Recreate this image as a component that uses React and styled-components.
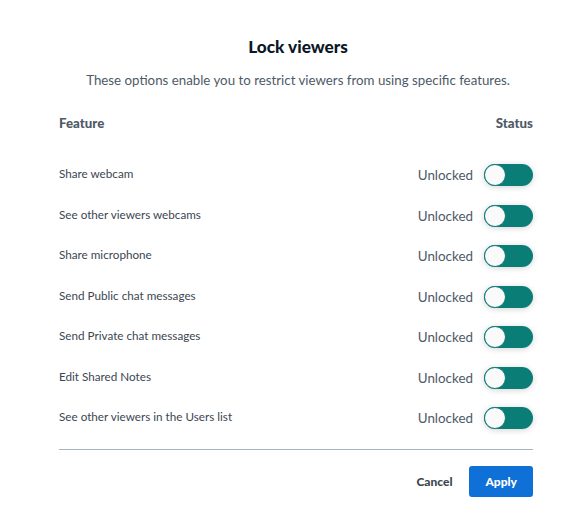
import React, { useState } from "react"
import styled, { createGlobalStyle } from "styled-components"

const GlobalStyle = createGlobalStyle`
  html, body { margin: 0; padding: 0; background: #fff; }
  body { font-family: Lato, "Liberation Sans", sans-serif; }
`

const features = [
  "Share webcam",
  "See other viewers webcams",
  "Share microphone",
  "Send Public chat messages",
  "Send Private chat messages",
  "Edit Shared Notes",
  "See other viewers in the Users list",
]

//{{{ Modal
const Modal = styled.div`
  width: 474px;
  padding: 36px 53px 0 59px;
  display: flex;
  flex-direction: column;
`
const Title = styled.h2`
  margin: 0;
  text-align: center;
  font: 900 17.2px Lato, sans-serif;
  color: #0b1727;
  line-height: 22px;
  padding-left: 4px;
`
const Subtitle = styled.p`
  margin: 11px 0 0;
  text-align: center;
  font: 400 13.3px Lato, sans-serif;
  color: #4e5a66;
  line-height: 22px;
  padding-left: 4px;
`
const HeaderRow = styled.div`
  display: flex;
  justify-content: space-between;
  margin-top: 22px;
  font: 900 13.3px Lato, sans-serif;
  color: #4e5a66;
  line-height: 20px;
`
const List = styled.div`
  display: flex;
  flex-direction: column;
  margin-top: 22px;
`
const Row = styled.div`
  display: flex;
  align-items: center;
  justify-content: space-between;
  height: 40.5px;
`
const Label = styled.span`
  font: 400 11.7px Lato, sans-serif;
  color: #3b4651;
  margin-top: -4px;
`
const StatusCell = styled.div`
  display: flex;
  align-items: center;
  gap: 11px;
`
const StatusText = styled.span`
  font: 400 13.4px Lato, sans-serif;
  color: #4e5a66;
`
//}}}
//{{{ Toggle
const Track = styled.button`
  position: relative;
  width: 49px;
  height: 22px;
  padding: 0;
  border: none;
  border-radius: 11px;
  background: #0b7d77;
  box-shadow: 0 1px 6px rgba(0, 0, 0, 0.18);
  cursor: pointer;
`
const Knob = styled.span`
  position: absolute;
  top: 0;
  left: ${({ $on }) => ($on ? "27px" : "0")};
  width: 22px;
  height: 22px;
  box-sizing: border-box;
  border-radius: 50%;
  background: #fafafa;
  border: 1.5px solid #0b7d77;
`
//}}}
const Divider = styled.hr`
  margin: 10px 0 0;
  border: none;
  border-top: 1px solid #a7b3bd;
`
const Footer = styled.div`
  display: flex;
  justify-content: flex-end;
  align-items: center;
  gap: 17px;
  margin-top: 16px;
`
const Button = styled.button`
  font: 900 12px Lato, sans-serif;
  border: none;
  border-radius: 3px;
  height: 31px;
  cursor: pointer;
  padding: ${({ $primary }) => ($primary ? "0 16px" : "0")};
  background: ${({ $primary }) => ($primary ? "#0f70d7" : "transparent")};
  color: ${({ $primary }) => ($primary ? "#fff" : "#3b4651")};
`

const Toggle = ({ on, onClick }) => (
  <Track onClick={onClick} aria-label="toggle">
    <Knob $on={on} />
  </Track>
)

export default function App() {
  const [locked, setLocked] = useState(features.map(() => false))
  const flip = (i) => setLocked((l) => l.map((v, j) => (j === i ? !v : v)))
  return (
    <>
      <GlobalStyle />
      <Modal>
        <Title>Lock viewers</Title>
        <Subtitle>These options enable you to restrict viewers from using specific features.</Subtitle>
        <HeaderRow>
          <span>Feature</span>
          <span>Status</span>
        </HeaderRow>
        <List>
          {features.map((f, i) => (
            <Row key={f}>
              <Label>{f}</Label>
              <StatusCell>
                <StatusText>{locked[i] ? "Locked" : "Unlocked"}</StatusText>
                <Toggle on={locked[i]} onClick={() => flip(i)} />
              </StatusCell>
            </Row>
          ))}
        </List>
        <Divider />
        <Footer>
          <Button>Cancel</Button>
          <Button $primary>Apply</Button>
        </Footer>
      </Modal>
    </>
  )
}
